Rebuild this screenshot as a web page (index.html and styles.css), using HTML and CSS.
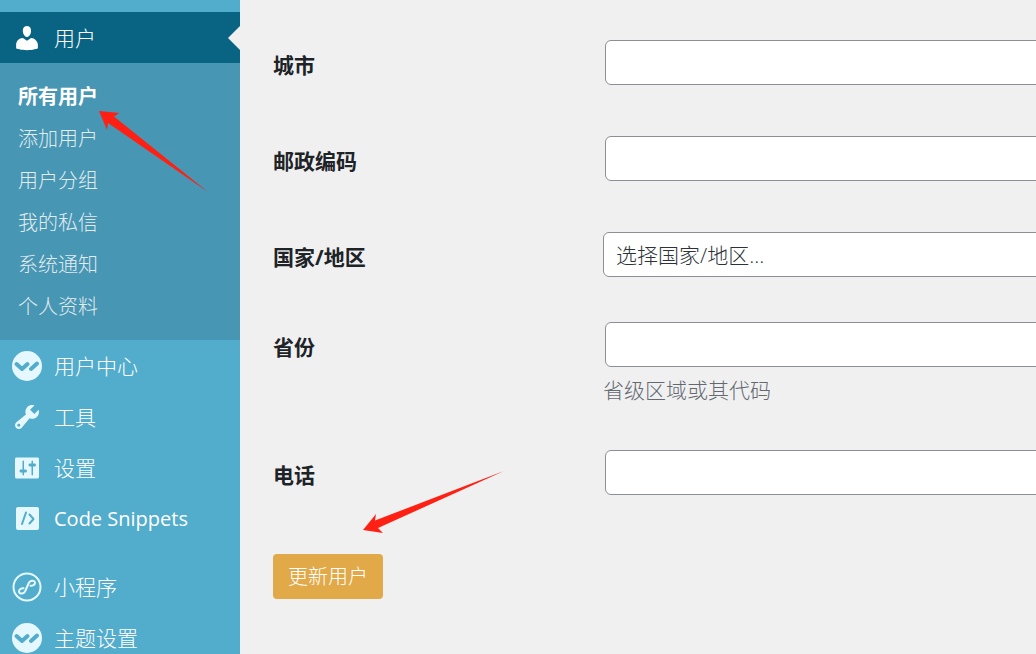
FILE: index.html
```html
<!DOCTYPE html>
<html lang="zh-CN">
<head>
<meta charset="utf-8">
<title>用户</title>
<link rel="stylesheet" href="styles.css">
</head>
<body>
<div class="wrap">
  <nav class="sidebar">
    <a class="menu-item current" href="#">
      <svg class="icon" viewBox="0 0 20 20"><path d="M10 9.25c-2.27 0-2.73-3.44-2.73-3.44C7 4.02 7.82 2 9.97 2c2.16 0 2.98 2.02 2.71 3.81 0 0-.41 3.44-2.68 3.44zm0 2.57L12.72 10c2.39 0 4.52 2.33 4.52 4.53v2.49s-3.65 1.13-7.24 1.13c-3.65 0-7.24-1.13-7.24-1.13v-2.49c0-2.25 1.94-4.48 4.47-4.48z"/></svg>
      用户
    </a>
    <ul class="submenu">
      <li><a class="active" href="#">所有用户</a></li>
      <li><a href="#">添加用户</a></li>
      <li><a href="#">用户分组</a></li>
      <li><a href="#">我的私信</a></li>
      <li><a href="#">系统通知</a></li>
      <li><a href="#">个人资料</a></li>
    </ul>
    <a class="menu-item" href="#">
      <svg class="icon" viewBox="0 0 30 30"><circle cx="15" cy="15" r="15"/><path class="cut wide" d="M4.500 13l5.500 5 5.500-5M19 18l6-5.500"/></svg>
      用户中心
    </a>
    <a class="menu-item" href="#">
      <svg class="icon" viewBox="0 0 20 20"><path d="M16.68 9.77c-1.34 1.34-3.3 1.67-4.95.99l-5.41 6.52c-.99.99-2.59.99-3.58 0s-.99-2.59 0-3.57l6.52-5.42c-.68-1.65-.35-3.61.99-4.95 1.28-1.28 3.12-1.62 4.72-1.06l-2.89 2.89 2.82 2.82 2.86-2.87c.53 1.58.18 3.39-1.08 4.65zM3.81 16.21c.4.39 1.04.39 1.43 0 .4-.4.4-1.04 0-1.43-.39-.4-1.03-.4-1.43 0-.39.39-.39 1.03 0 1.43z"/></svg>
      工具
    </a>
    <a class="menu-item" href="#">
      <svg class="icon" viewBox="0 0 20 20"><path d="M18 16V4c0-.55-.45-1-1-1H3c-.55 0-1 .45-1 1v12c0 .55.45 1 1 1h14c.55 0 1-.45 1-1zM8 11h1c.55 0 1 .45 1 1s-.45 1-1 1H8v1.5c0 .28-.22.5-.5.5s-.5-.22-.5-.5V13H6c-.55 0-1-.45-1-1s.45-1 1-1h1V5.5c0-.28.22-.5.5-.5s.5.22.5.5V11zm5-2h-1c-.55 0-1-.45-1-1s.45-1 1-1h1V5.5c0-.28.22-.5.5-.5s.5.22.5.5V7h1c.55 0 1 .45 1 1s-.45 1-1 1h-1v5.5c0 .28-.22.5-.5.5s-.5-.22-.5-.5V9z"/></svg>
      设置
    </a>
    <a class="menu-item latin" href="#">
      <svg class="icon" viewBox="0 0 30 30"><rect x="4" y="3" width="23" height="23" rx="2"/><path class="cut" d="M14 8.500L10 20M17.500 10.500l4 4.500-4 4.500"/></svg>
      Code Snippets
    </a>
    <div class="separator"></div>
    <a class="menu-item" href="#">
      <svg class="icon" viewBox="0 0 30 30"><circle class="line" cx="15" cy="15" r="13.500"/><path class="line" d="M11.500 16.200C9 16 7 17.500 7 19.500 7 22.300 12 22.500 13.500 18.500L16.500 11.500C18 7.800 23 8 23 10.800 23 13 20.500 14 18.500 13.800"/></svg>
      小程序
    </a>
    <a class="menu-item" href="#">
      <svg class="icon" viewBox="0 0 30 30"><circle cx="15" cy="15" r="15"/><path class="cut wide" d="M4.500 13l5.500 5 5.500-5M19 18l6-5.500"/></svg>
      主题设置
    </a>
  </nav>

  <form class="content">
    <div class="row">
      <label for="city">城市</label>
      <div class="field"><input type="text" id="city"></div>
    </div>
    <div class="row">
      <label for="postcode">邮政编码</label>
      <div class="field"><input type="text" id="postcode"></div>
    </div>
    <div class="row">
      <label for="country">国家/地区</label>
      <div class="field">
        <select id="country"><option>选择国家/地区...</option></select>
      </div>
    </div>
    <div class="row">
      <label for="state">省份</label>
      <div class="field">
        <input type="text" id="state">
        <p class="description">省级区域或其代码</p>
      </div>
    </div>
    <div class="row">
      <label for="phone">电话</label>
      <div class="field"><input type="text" id="phone"></div>
    </div>
    <button class="submit" type="button">更新用户</button>
  </form>

  <!-- arrows pointing at the menu entry and the button -->
  <svg class="arrow arrow-menu" viewBox="0 0 109 81"><path d="M0 0L20.500 2 15 5.500 109 81 9 12 8 19z"/></svg>
  <svg class="arrow arrow-button" viewBox="0 0 141 62"><path d="M0 59L13 43 12 49.500 141 0 15 57 20 62z"/></svg>
</div>
</body>
</html>
```
FILE: styles.css
```css
* { box-sizing: border-box; }
body {
  margin: 0;
  background-color: #f0f0f1;
  color: #1d2327;
  font-family: "Open Sans", "Noto Sans CJK SC", sans-serif;
  font-size: 21px;
  font-weight: 300;
  line-height: 28px;
}
.wrap {
  position: relative;
  display: flex;
  height: 100vh;
  overflow: hidden;
}

.sidebar {
  flex: 0 0 240px;
  padding-top: 12px;
  background-color: #52accc;
}
.sidebar a {
  color: white;
  text-decoration: none;
}
.menu-item {
  display: flex;
  align-items: center;
  gap: 12px;
  height: 51px;
  padding-left: 12px;
}
.latin {
  font-size: 20px;
  font-weight: 400;
}
.current {
  position: relative;
  background-color: #096484;
}
.current::after {
  content: "";
  position: absolute;
  right: 0;
  border: 12px solid transparent;
  border-left: none;
  border-right-color: #f0f0f1;
}
.submenu {
  margin: 0;
  padding: 13px 18px 12px;
  background-color: #4796b3;
  list-style: none;
  font-size: 20px;
  line-height: 42px;
}
.submenu a { color: #e2ecf1; }
.submenu .active {
  color: white;
  font-weight: bold;
}
.separator { height: 17px; }

.icon {
  width: 30px;
  height: 30px;
  fill: #e5f8ff;
}
.current .icon { fill: white; }
.icon .cut, .icon .line {
  fill: none;
  stroke: #52accc;
  stroke-width: 2;
  stroke-linecap: round;
  stroke-linejoin: round;
}
.icon .wide { stroke-width: 4; }
.icon .line { stroke: #e5f8ff; }

.content {
  flex: 1;
  min-width: 0;
  padding: 18px 0 0 33px;
}
.row {
  display: grid;
  grid-template-columns: 330px 1fr;
  padding: 22px 0 23px;
}
.row label {
  padding-top: 11px;
  font-weight: bold;
}
input, select {
  display: block;
  width: calc(100% + 40px);
  height: 45px;
  border: 1px solid #8c8f94;
  border-radius: 6px;
  background-color: white;
  color: #2c3338;
  font: inherit;
}
input {
  margin: 0 2px 6px;
  padding: 0 12px;
}
select {
  appearance: none;
  padding: 0 12px;
}
.description {
  margin: 0;
  padding: 3px 0 1px;
  color: #646970;
}
.submit {
  height: 45px;
  margin-top: 30px;
  padding: 0 15px;
  border: none;
  border-radius: 4px;
  background-color: #e1a948;
  color: white;
  font: inherit;
  font-size: 20px;
}

.arrow {
  position: absolute;
  fill: #ff2014;
  pointer-events: none;
}
.arrow-menu {
  left: 99px;
  top: 111px;
  width: 109px;
}
.arrow-button {
  left: 363px;
  top: 471px;
  width: 141px;
}
```
